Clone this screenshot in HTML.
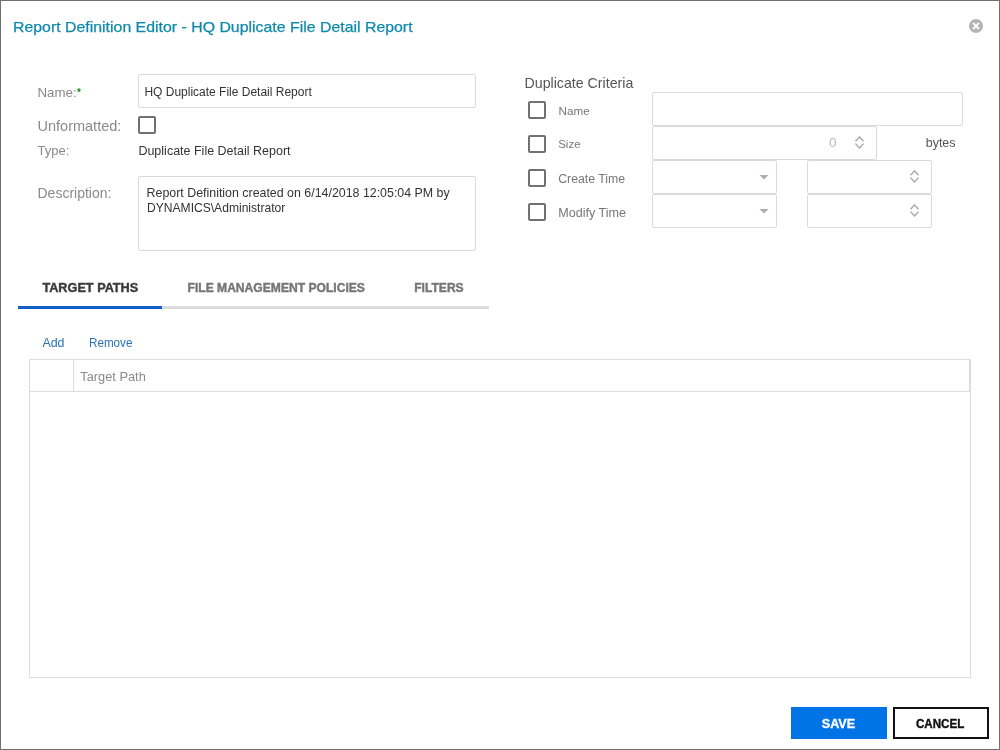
<!DOCTYPE html>
<html><head><meta charset="utf-8">
<style>
html,body{margin:0;padding:0;width:1000px;height:750px;overflow:hidden;background:#fff;}
body{position:relative;will-change:transform;font-family:"Liberation Sans",sans-serif;}
.t{position:absolute;white-space:nowrap;line-height:1;}
.box{position:absolute;box-sizing:border-box;border:1px solid #dadada;border-radius:2px;background:#fff;}
.cb{position:absolute;box-sizing:border-box;width:18px;height:18px;border:2px solid #717171;border-radius:2px;}
.frame{position:absolute;left:0;top:0;width:1000px;height:750px;box-sizing:border-box;border:1px solid #707070;}
</style></head><body>
<div class="frame"></div>

<div class="t" style="left:13.4px;top:19.4px;font-size:15px;color:#0f89ab;transform:scaleX(1.058);transform-origin:0 0;-webkit-text-stroke:0.25px #0f89ab;">Report Definition Editor - HQ Duplicate File Detail Report</div>

<svg style="position:absolute;left:969px;top:19px" width="14" height="14" viewBox="0 0 14 14">
<circle cx="7" cy="7" r="7" fill="#b4b4b4"/>
<path d="M4 4 L10 10 M10 4 L4 10" stroke="#fff" stroke-width="1.9"/>
</svg>

<!-- left form -->
<div class="t" style="left:37.5px;top:85.8px;font-size:13.3px;color:#8a8a8a;">Name:</div>
<div class="t" style="left:77px;top:87.6px;font-size:10px;color:#178c17;font-weight:bold;">*</div>
<div class="box" style="left:138px;top:74px;width:338px;height:34px;"></div>
<div class="t" style="left:144.4px;top:85.8px;font-size:12px;color:#333;">HQ Duplicate File Detail Report</div>

<div class="t" style="left:37.5px;top:118.5px;font-size:14.5px;color:#8a8a8a;">Unformatted:</div>
<div class="cb" style="left:138px;top:116px;"></div>

<div class="t" style="left:37.5px;top:143.5px;font-size:13px;color:#8a8a8a;">Type:</div>
<div class="t" style="left:138.4px;top:144.6px;font-size:12.5px;color:#333;">Duplicate File Detail Report</div>

<div class="t" style="left:37.5px;top:186px;font-size:14px;color:#8a8a8a;">Description:</div>
<div class="box" style="left:138px;top:176px;width:338px;height:75px;"></div>
<div class="t" style="left:146.6px;top:187.3px;font-size:12.4px;color:#333;">Report Definition created on 6/14/2018 12:05:04 PM by</div>
<div class="t" style="left:146.6px;top:202px;font-size:12.4px;color:#333;transform:scaleX(0.975);transform-origin:0 0;">DYNAMICS\Administrator</div>

<!-- right criteria -->
<div class="t" style="left:524.5px;top:76px;font-size:14.2px;color:#555;">Duplicate Criteria</div>
<div class="cb" style="left:528px;top:101px;"></div>
<div class="cb" style="left:528px;top:135px;"></div>
<div class="cb" style="left:528px;top:169px;"></div>
<div class="cb" style="left:528px;top:203px;"></div>
<div class="t" style="left:558.5px;top:105.2px;font-size:11.7px;color:#777;">Name</div>
<div class="t" style="left:558.2px;top:139.2px;font-size:11.5px;color:#777;">Size</div>
<div class="t" style="left:558.2px;top:173.2px;font-size:12.3px;color:#777;">Create Time</div>
<div class="t" style="left:558.2px;top:207.2px;font-size:12.6px;color:#777;">Modify Time</div>

<div class="box" style="left:652px;top:92px;width:311px;height:34px;"></div>
<div class="box" style="left:652px;top:126px;width:225px;height:34px;"></div>
<div class="t" style="left:829.1px;top:136.8px;font-size:12px;color:#b8b8b8;transform:scaleX(1.12);transform-origin:0 0;">0</div>
<svg style="position:absolute;left:854px;top:136px" width="11" height="14" viewBox="0 0 11 14">
<path d="M1.5 5.3 L5.5 0.9 L9.5 5.3 M1.5 7.6 L5.5 12 L9.5 7.6" fill="none" stroke="#a8a8a8" stroke-width="1.4"/>
</svg>
<div class="t" style="left:925.7px;top:137px;font-size:12.5px;color:#555;">bytes</div>

<div class="box" style="left:652px;top:160px;width:125px;height:34px;"></div>
<svg style="position:absolute;left:759px;top:175px" width="10" height="6" viewBox="0 0 10 6"><path d="M0.5 0 L9.5 0 L5 4.6 Z" fill="#adadad"/></svg>
<div class="box" style="left:807px;top:160px;width:125px;height:34px;"></div>
<svg style="position:absolute;left:909px;top:170px" width="11" height="14" viewBox="0 0 11 14">
<path d="M1.5 5.3 L5.5 0.9 L9.5 5.3 M1.5 7.6 L5.5 12 L9.5 7.6" fill="none" stroke="#a8a8a8" stroke-width="1.4"/>
</svg>

<div class="box" style="left:652px;top:194px;width:125px;height:34px;"></div>
<svg style="position:absolute;left:759px;top:209px" width="10" height="6" viewBox="0 0 10 6"><path d="M0.5 0 L9.5 0 L5 4.6 Z" fill="#adadad"/></svg>
<div class="box" style="left:807px;top:194px;width:125px;height:34px;"></div>
<svg style="position:absolute;left:909px;top:204px" width="11" height="14" viewBox="0 0 11 14">
<path d="M1.5 5.3 L5.5 0.9 L9.5 5.3 M1.5 7.6 L5.5 12 L9.5 7.6" fill="none" stroke="#a8a8a8" stroke-width="1.4"/>
</svg>

<!-- tabs -->
<div class="t" style="left:42.4px;top:281.7px;font-size:12.7px;font-weight:bold;color:#3a3a3a;-webkit-text-stroke:0.4px #3a3a3a;">TARGET PATHS</div>
<div class="t" style="left:187.5px;top:281.7px;font-size:12.1px;font-weight:bold;color:#767676;-webkit-text-stroke:0.4px #767676;">FILE MANAGEMENT POLICIES</div>
<div class="t" style="left:414.2px;top:281.7px;font-size:12.1px;font-weight:bold;color:#767676;-webkit-text-stroke:0.4px #767676;">FILTERS</div>
<div style="position:absolute;left:18px;top:306px;width:471px;height:3px;background:#dcdcdc;"></div>
<div style="position:absolute;left:18px;top:306px;width:144px;height:3px;background:#1060c8;"></div>

<div class="t" style="left:42.4px;top:336.6px;font-size:12.4px;color:#2a72b5;">Add</div>
<div class="t" style="left:89px;top:336.6px;font-size:12.4px;transform:scaleX(0.94);transform-origin:0 0;color:#2a72b5;">Remove</div>

<!-- table -->
<div style="position:absolute;left:29px;top:359px;width:942px;height:319px;box-sizing:border-box;border:1px solid #dcdcdc;"></div>
<div style="position:absolute;left:30px;top:391px;width:940px;height:1px;background:#dcdcdc;"></div>
<div style="position:absolute;left:73px;top:360px;width:1px;height:31px;background:#dcdcdc;"></div>
<div style="position:absolute;left:969px;top:360px;width:1px;height:31px;background:#dcdcdc;"></div>
<div class="t" style="left:80.3px;top:371px;font-size:12.8px;color:#8a8a8a;">Target Path</div>

<!-- buttons -->
<div style="position:absolute;left:791px;top:707px;width:96px;height:32px;background:#0073e7;"></div>
<div class="t" style="left:821.8px;top:717.5px;font-size:12.6px;font-weight:bold;color:#fff;-webkit-text-stroke:0.35px #fff;">SAVE</div>
<div style="position:absolute;left:893px;top:707px;width:96px;height:32px;box-sizing:border-box;border:2px solid #111;"></div>
<div class="t" style="left:916.4px;top:717.5px;font-size:12.6px;transform:scaleX(0.92);transform-origin:0 0;-webkit-text-stroke:0.4px #111;font-weight:bold;color:#111;">CANCEL</div>
</body></html>
